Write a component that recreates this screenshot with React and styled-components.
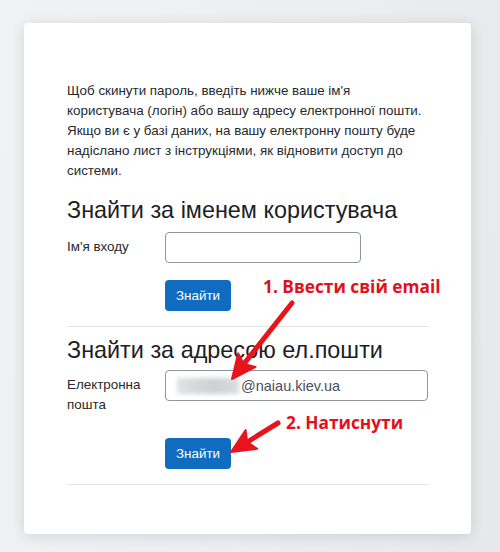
import React from "react";
import styled, { createGlobalStyle } from "styled-components";

const Global = createGlobalStyle`
  html, body { margin: 0; padding: 0; }
  body {
    width: 500px;
    height: 552px;
    overflow: hidden;
    background: linear-gradient(100deg, #f1f2f4 0%, #eceef1 50%, #e6e8eb 100%);
    font-family: "Liberation Sans", Arial, sans-serif;
    color: #1d2125;
  }
`;

const Page = styled.div`
  position: relative;
  width: 500px;
  height: 552px;
  padding: 23px 29px 0 24px;
  box-sizing: border-box;
`;

const Card = styled.div`
  background: #fff;
  width: 447px;
  height: 511px;
  box-sizing: border-box;
  border-radius: 4px;
  box-shadow: 0 2px 14px rgba(0, 0, 0, 0.12);
  padding: 58px 42px 0 43px;
`;

const Intro = styled.p`
  margin: 0;
  font-size: 13.4px;
  line-height: 20px;
  color: #262a2e;
`;

const Heading = styled.h3`
  margin: ${(p) => p.$top}px 0 0;
  font-weight: 400;
  font-size: 23.4px;
  line-height: 26px;
  color: #1d2125;
`;

const FormRow = styled.div`
  display: grid;
  grid-template-columns: 98px 1fr;
  align-items: start;
  margin-top: ${(p) => p.$top}px;
`;

const Label = styled.label`
  font-size: 13.4px;
  line-height: 20px;
  color: #262a2e;
  padding-top: 5px;
`;

const Input = styled.div`
  width: ${(p) => p.$w}px;
  height: 31px;
  box-sizing: border-box;
  border: 1px solid #8f959e;
  border-radius: 4px;
  background: #fff;
  display: flex;
  align-items: center;
  padding: 0 11px;
  font-size: 14.5px;
  color: #495057;
`;

const Blur = styled.span`
  display: inline-block;
  width: 62px;
  height: 16px;
  margin-right: 2px;
  background: linear-gradient(90deg, #e2e3e5 0%, #d6d7d9 35%, #cfd0d2 60%, #dcdddf 100%);
  filter: blur(2px);
`;

const ButtonRow = styled.div`
  margin: ${(p) => p.$top}px 0 0 98px;
`;

const Button = styled.button`
  width: 66px;
  height: 31px;
  border: none;
  border-radius: 4px;
  background: #0f6cbf;
  color: #fff;
  font-family: "Liberation Sans", Arial, sans-serif;
  font-size: 13.4px;
  padding: 0;
`;

const Rule = styled.hr`
  margin: ${(p) => p.$top}px 0 0;
  border: none;
  border-top: 1px solid #e3e4e6;
  height: 0;
`;

const Note = styled.div`
  position: absolute;
  left: ${(p) => p.$x}px;
  top: ${(p) => p.$y}px;
  font-family: "Open Sans", sans-serif;
  font-weight: 700;
  font-size: 17.3px;
  line-height: 20px;
  color: #e3101a;
  white-space: nowrap;
`;

const Overlay = styled.svg`
  position: absolute;
  left: 0;
  top: 0;
  pointer-events: none;
`;

function Arrow({ x1, y1, x2, y2 }) {
  const dx = x2 - x1;
  const dy = y2 - y1;
  const len = Math.hypot(dx, dy);
  const ux = dx / len;
  const uy = dy / len;
  const head = 24;
  const half = 11;
  const bx = x2 - ux * head;
  const by = y2 - uy * head;
  const px = -uy;
  const py = ux;
  const pts = `${x2},${y2} ${bx + px * half},${by + py * half} ${bx + ux * 5},${by + uy * 5} ${bx - px * half},${by - py * half}`;
  return (
    <g>
      <line x1={x1} y1={y1} x2={bx + ux * 6} y2={by + uy * 6} stroke="#e8141c" strokeWidth="5" strokeLinecap="round" />
      <polygon points={pts} fill="#e8141c" stroke="#e8141c" strokeWidth="2" strokeLinejoin="round" />
    </g>
  );
}

export default function App() {
  return (
    <>
      <Global />
      <Page>
        <Card>
          <Intro>
            Щоб скинути пароль, введіть нижче ваше ім'я користувача (логін) або вашу адресу електронної пошти. Якщо ви є у базі даних, на вашу електронну пошту буде надіслано лист з інструкціями, як відновити доступ до системи.
          </Intro>
          <Heading $top={16}>Знайти за іменем користувача</Heading>
          <FormRow $top={9}>
            <Label>Ім'я входу</Label>
            <Input $w={196} />
          </FormRow>
          <ButtonRow $top={17}>
            <Button>Знайти</Button>
          </ButtonRow>
          <Rule $top={15} />
          <Heading $top={10}>Знайти за адресою ел.пошти</Heading>
          <FormRow $top={7}>
            <Label>Електронна пошта</Label>
            <Input $w={263}>
              <Blur />
              @naiau.kiev.ua
            </Input>
          </FormRow>
          <ButtonRow $top={23}>
            <Button>Знайти</Button>
          </ButtonRow>
          <Rule $top={15} />
        </Card>
        <Note $x={263} $y={277}>1. Ввести свій email</Note>
        <Note $x={286} $y={413}>2. Натиснути</Note>
        <Overlay width="500" height="552" viewBox="0 0 500 552">
          <Arrow x1={292} y1={303} x2={232} y2={379} />
          <Arrow x1={278} y1={423} x2={231} y2={452} />
        </Overlay>
      </Page>
    </>
  );
}
